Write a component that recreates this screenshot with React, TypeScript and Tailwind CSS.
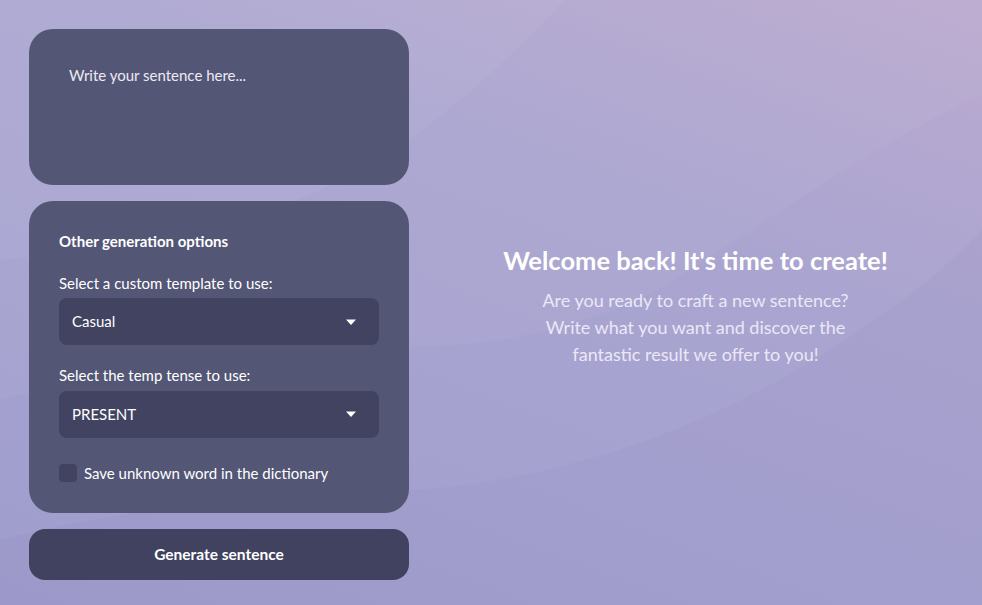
import { useState } from "react"

function Caret() {
  return (
    <svg width="12" height="8" viewBox="0 0 12 8" className="shrink-0">
      <path d="M1 1.5h10L6 7z" fill="#ffffff" />
    </svg>
  )
}

function Waves() {
  return (
    <svg
      className="absolute inset-0 h-full w-full pointer-events-none"
      viewBox="0 0 982 605"
      preserveAspectRatio="none"
    >
      <path d="M0 0H565C500 70 440 120 380 160C260 230 120 250 0 260Z" fill="#ffffff" fillOpacity="0.07" />
      <path d="M0 260C120 250 260 230 380 160C440 120 500 70 565 0H982V95C860 150 760 230 640 300C540 340 470 347 400 347C250 347 120 370 0 400Z" fill="#ffffff" fillOpacity="0.035" />
      <path d="M0 540C150 500 320 495 400 491C600 480 760 400 860 330C920 290 960 255 982 230V605H0Z" fill="#6f6cb0" fillOpacity="0.06" />
    </svg>
  )
}

function SelectBox({ value }: { value: string }) {
  return (
    <div className="flex h-[47px] items-center justify-between rounded-lg bg-[#414361] pl-[13px] pr-[22px] text-[15px] text-white">
      <span>{value}</span>
      <Caret />
    </div>
  )
}

export default function App() {
  const [saveWord, setSaveWord] = useState(false)

  return (
    <div
      className="relative flex h-[605px] w-[982px] overflow-hidden bg-[linear-gradient(200deg,#bcaad0_0%,#aaa5d0_35%,#a5a2d0_65%,#9f9dcc_100%)]"
      style={{ fontFamily: "Lato, 'Open Sans', sans-serif" }}
    >
      <Waves />

      {/* Left column */}
      <div className="relative z-10 flex w-[380px] shrink-0 flex-col gap-4 pl-[29px] pt-[29px] box-content">
        <div className="h-[156px] rounded-[24px] bg-[#545675] px-10 pt-[35px]">
          <p className="text-[15px] text-[#eceaf5]">Write your sentence here...</p>
        </div>

        <div className="h-[312px] rounded-[24px] bg-[#545675] px-[30px] pt-[29px]">
          <h2 className="text-[15px] font-bold text-white">Other generation options</h2>

          <p className="mt-[19px] text-[15px] text-white">Select a custom template to use:</p>
          <div className="mt-[4px]">
            <SelectBox value="Casual" />
          </div>

          <p className="mt-[19px] text-[15px] text-white">Select the temp tense to use:</p>
          <div className="mt-[4px]">
            <SelectBox value="PRESENT" />
          </div>

          <label className="mt-[24px] flex items-center gap-[7px] text-[15px] text-white">
            <span
              onClick={() => setSaveWord(!saveWord)}
              className="h-[18px] w-[18px] rounded-[4px] bg-[#414361]"
            />
            Save unknown word in the dictionary
          </label>
        </div>

        <button className="h-[51px] rounded-2xl bg-[#40425f] text-[15.5px] font-bold text-white">
          Generate sentence
        </button>
      </div>

      {/* Right side */}
      <div className="relative z-10 flex flex-1 flex-col items-center justify-center pt-[6px]">
        <h1 className="text-[25.5px] font-bold leading-[34px] text-white">Welcome back! It's time to create!</h1>
        <p className="mt-[10px] w-[340px] text-center text-[18px] leading-[27px] text-[#ebe7f6]">
          Are you ready to craft a new sentence? Write what you want and discover the fantastic result we offer to you!
        </p>
      </div>
    </div>
  )
}
